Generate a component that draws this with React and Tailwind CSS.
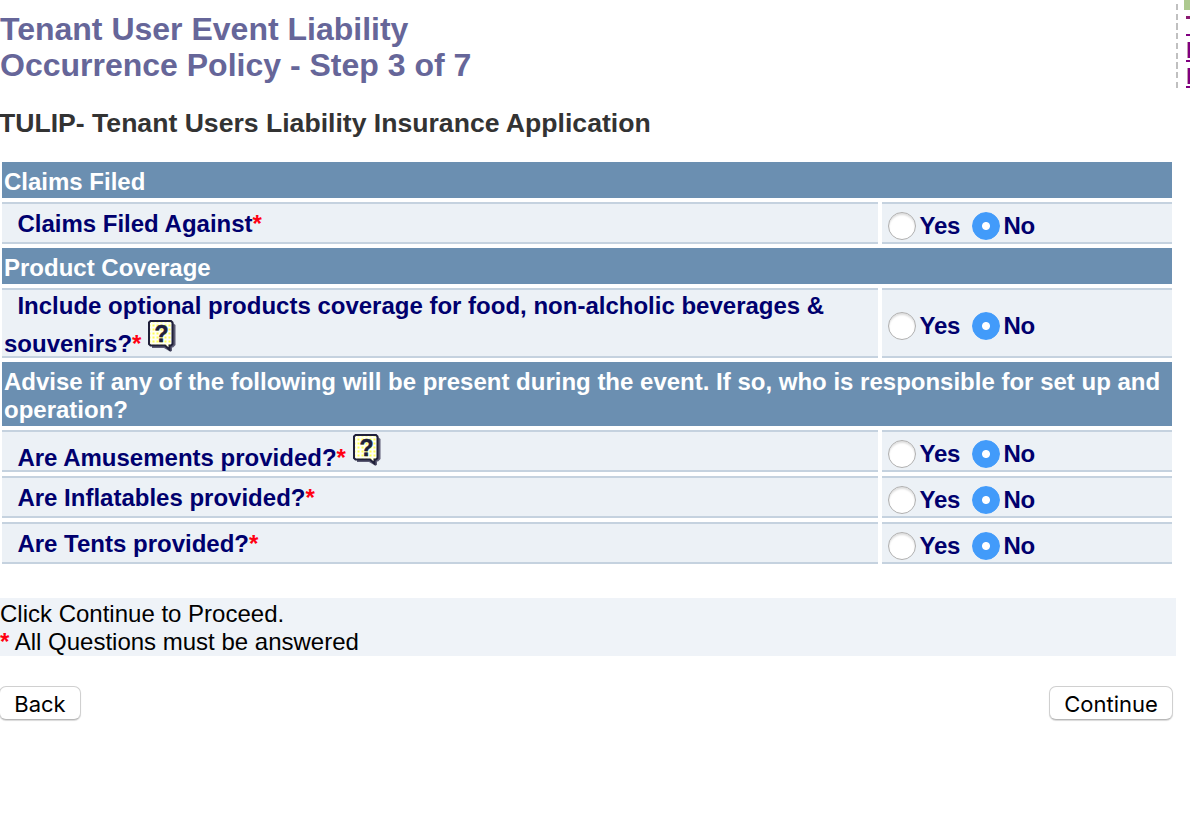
import React, { useState } from 'react';

const sections = [
  {
    title: 'Claims Filed',
    height: 'h-9',
    rows: [
      { id: 'claims', label: 'Claims Filed Against', height: 'h-[42px]', pad: 'pt-[6px]', radioPad: 'pt-[8px]' },
    ],
  },
  {
    title: 'Product Coverage',
    height: 'h-9',
    rows: [
      {
        id: 'products',
        label: 'Include optional products coverage for food, non-alcholic beverages &',
        label2: 'souvenirs?',
        help: true,
        height: 'h-[70px]',
        pad: 'pt-[2px]',
        radioPad: 'pt-[22px]',
      },
    ],
  },
  {
    title: 'Advise if any of the following will be present during the event. If so, who is responsible for set up and operation?',
    height: 'h-16',
    rows: [
      { id: 'amusements', label: 'Are Amusements provided?', help: true, height: 'h-[42px]', pad: 'pt-[12px]', radioPad: 'pt-[8px]' },
      { id: 'inflatables', label: 'Are Inflatables provided?', height: 'h-[42px]', pad: 'pt-[6px]', radioPad: 'pt-[8px]' },
      { id: 'tents', label: 'Are Tents provided?', height: 'h-[42px]', pad: 'pt-[6px]', radioPad: 'pt-[8px]' },
    ],
  },
];

function HelpIcon() {
  return (
    <svg width="28" height="32" viewBox="0 0 28 32" className="-mt-[10px] ml-[7px] shrink-0">
      <defs>
        <pattern id="dots" width="4" height="4" patternUnits="userSpaceOnUse">
          <rect width="4" height="4" fill="#fffff4" />
          <rect x="0.500" y="0.500" width="2" height="2" fill="#ffff55" />
        </pattern>
      </defs>
      <path d="M4 3H25L27.500 5V25L25 27.500H24V31L22 31.500L16 28H4Z" fill="#5c5c74" />
      <path d="M2.500 1H23L24.500 2.500V24L23 25.500H21.500V29.500L17 25.500H2.500L1 24V2.500Z" fill="url(#dots)" stroke="#20203a" strokeWidth="2" />
      <text x="13.500" y="21.500" textAnchor="middle" fontSize="23" fontWeight="700" fill="#20203a" stroke="#20203a" strokeWidth="0.600" fontFamily="Liberation Sans, sans-serif">?</text>
    </svg>
  );
}

function Radio({ name, label, checked, onChange }) {
  return (
    <label className="flex h-7 items-center">
      <input
        type="radio"
        name={name}
        checked={checked}
        onChange={onChange}
        className="mr-[3.5px] size-7 appearance-none rounded-full border border-[#b0b0b0] bg-white shadow-[inset_0_2px_2px_rgba(0,0,0,0.13)] checked:border-[#429bfa] checked:bg-[radial-gradient(circle,#ffffff_3.5px,#429bfa_4.5px)] checked:shadow-none"
      />
      <span className="tracking-[-0.3px]">{label}</span>
    </label>
  );
}

function Star() {
  return <span className="font-bold text-[#ff0012]">*</span>;
}

function App() {
  const [answers, setAnswers] = useState({});

  const handleAnswer = (id, value) => {
    setAnswers({ ...answers, [id]: value });
  };

  return (
    <div className="flex h-[824px] w-[1190px] overflow-hidden bg-white font-['Liberation_Sans',Arial,sans-serif] text-[24px] leading-[28px] text-black">
      <main className="w-[1176px] shrink-0 pt-[11px]">
        <h1 className="text-[32px] leading-[36px] font-bold text-[#666699]">
          Tenant User Event Liability
          <br />
          Occurrence Policy - Step 3 of 7
        </h1>
        <h2 className="mt-[25px] -ml-[1px] text-[26.6px] leading-[30px] font-bold whitespace-nowrap text-[#333333]">
          TULIP- Tenant Users Liability Insurance Application
        </h2>

        <div className="mt-6 ml-[2px] flex w-[1170px] flex-col gap-1 font-bold">
          {sections.map((section) => (
            <React.Fragment key={section.title}>
              <div className={`${section.height} bg-[#6b8fb1] pt-[6px] pl-[2px] text-white`}>{section.title}</div>
              {section.rows.map((row) => (
                <div key={row.id} className={`${row.height} flex gap-1 text-[#00006e]`}>
                  <div className={`${row.pad} w-[876px] border-y-2 border-[#c5d2df] bg-[#ecf1f6] pl-[2px] whitespace-nowrap`}>
                    <div className="flex pl-[13.4px]">
                      {row.label}
                      {!row.label2 && <Star />}
                      {row.help && !row.label2 && <HelpIcon />}
                    </div>
                    {row.label2 && (
                      <div className="mt-[10px] flex">
                        {row.label2}
                        <Star />
                        <HelpIcon />
                      </div>
                    )}
                  </div>
                  <div className={`${row.radioPad} flex w-[290px] items-start gap-3 border-y-2 border-[#c5d2df] bg-[#ecf1f6] pl-[6px]`}>
                    <Radio name={row.id} label="Yes" checked={answers[row.id] === 'yes'} onChange={() => handleAnswer(row.id, 'yes')} />
                    <Radio name={row.id} label="No" checked={answers[row.id] !== 'yes'} onChange={() => handleAnswer(row.id, 'no')} />
                  </div>
                </div>
              ))}
            </React.Fragment>
          ))}
        </div>

        <div className="mt-[34px] h-[58px] bg-[#eff3f8] pt-[2px]">
          <p>Click Continue to Proceed.</p>
          <p><Star /> All Questions must be answered</p>
        </div>

        <div className="mt-[30px] flex justify-between pr-[3px] font-['Inter',sans-serif] text-[22px]">
          <button className="-ml-[1px] h-[34px] w-[82px] rounded-[7px] border border-[#d0d0d0] border-b-[#b8b8b8] bg-white pt-[2px] shadow-[0_1px_1px_rgba(0,0,0,0.15)]">
            Back
          </button>
          <button className="h-[34px] w-[124px] rounded-[7px] border border-[#d0d0d0] border-b-[#b8b8b8] bg-white pt-[2px] shadow-[0_1px_1px_rgba(0,0,0,0.15)]">
            Continue
          </button>
        </div>
      </main>

      {/* edge of the side column, cut off by the window */}
      <aside className="flex w-[14px] shrink-0 items-start justify-between">
        <div className="mt-1 h-[84px] w-[2px] bg-[repeating-linear-gradient(to_bottom,#c0c0c0_0px,#c0c0c0_6px,transparent_6px,transparent_9.75px)]"></div>
        <div className="flex w-[6px] flex-col items-end">
          <div className="h-[10px] w-[6px] bg-[#adc98f]"></div>
          <div className="mt-[6px] h-[3px] w-1 bg-[#8b1a72]"></div>
          <div className="mt-[15px] h-[2px] w-1 bg-[#800080]"></div>
          <div className="mt-[6px] h-4 w-[3px] border-l border-[#c69db0] bg-[#800080]"></div>
          <div className="mt-[2px] h-[2px] w-1 bg-[#800080]"></div>
          <div className="mt-[6px] h-4 w-[3px] border-l border-[#c69db0] bg-[#800080]"></div>
          <div className="mt-[2px] h-[2px] w-1 bg-[#800080]"></div>
        </div>
      </aside>
    </div>
  );
}

export default App;
